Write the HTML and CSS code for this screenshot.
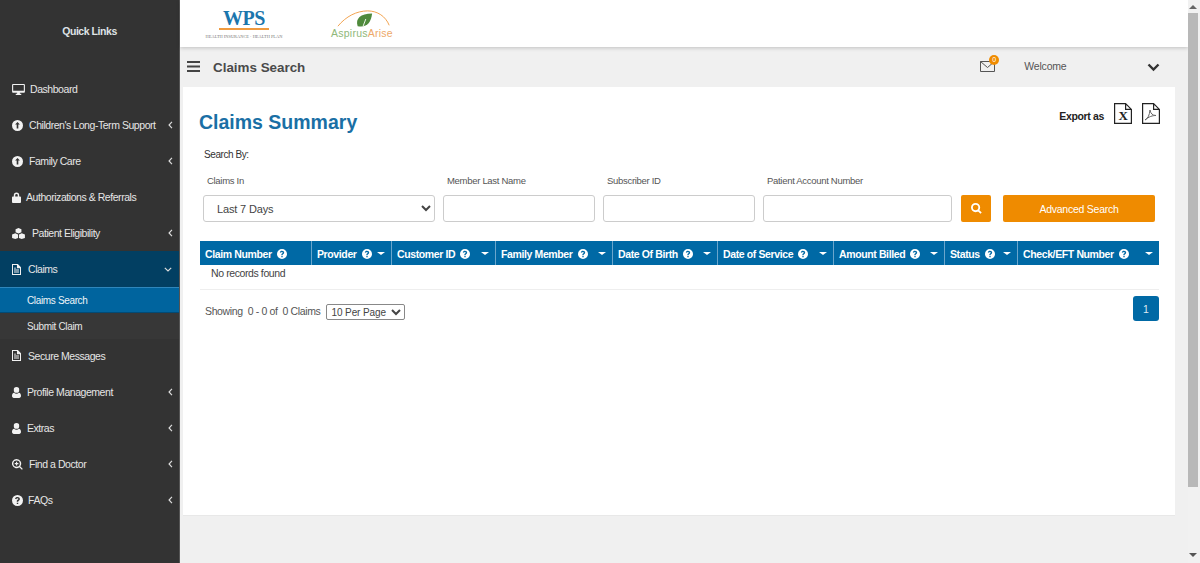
FILE: index.html
```html
<!DOCTYPE html>
<html lang="en">
<head>
<meta charset="utf-8">
<title>Claims Search</title>
<link rel="stylesheet" href="styles.css">
</head>
<body>
<svg class="sprite" aria-hidden="true">
  <symbol id="i-desktop" viewBox="0 0 14 12"><path fill-rule="evenodd" d="M1 0h12a1 1 0 0 1 1 1v7.500a1 1 0 0 1-1 1H8.500v1.200H10V12H4v-1.300h1.500V9.500H1a1 1 0 0 1-1-1V1a1 1 0 0 1 1-1zm.2 1.200v6.100h11.600V1.200z"/></symbol>
  <symbol id="i-circle-arrow" viewBox="0 0 12 12"><path fill-rule="evenodd" d="M6 0a6 6 0 1 1 0 12A6 6 0 0 1 6 0zm0 2.300L3.400 5h1.700v4.400h1.800V5h1.700z"/></symbol>
  <symbol id="i-lock" viewBox="0 0 10 12"><path fill-rule="evenodd" d="M2 5V3.500a3 3 0 0 1 6 0V5h1a1 1 0 0 1 1 1v5a1 1 0 0 1-1 1H1a1 1 0 0 1-1-1V6a1 1 0 0 1 1-1zm1.600 0h2.800V3.500a1.400 1.400 0 0 0-2.800 0z"/></symbol>
  <symbol id="i-cubes" viewBox="0 0 14 12"><path d="M7 0l3.200 1.300v3.400L7 6 3.800 4.700V1.300zM3.500 5.800l3 1.200v3.800l-3 1.200L0 10.800V7zM10.500 5.800L14 7v3.800L10.500 12l-3-1.200V7z"/></symbol>
  <symbol id="i-file" viewBox="0 0 10 12"><path fill-rule="evenodd" d="M0 0h6.500L10 3.500V12H0zm1.100 1.100v9.800h7.800V4.500H5.500V1.100zm1.100 5h5.600v1H2.200zm0 2.100h5.600v1H2.200zm0-4.200h2.300v1H2.200z"/></symbol>
  <symbol id="i-user" viewBox="0 0 10 12"><path d="M5 0a3 3 0 0 1 3 3.200A3 3 0 0 1 5 6.400a3 3 0 0 1-3-3.200A3 3 0 0 1 5 0zM2.300 6.300C3 7 4 7.400 5 7.400s2-.4 2.700-1.100C9.200 6.500 10 7.800 10 9.700 10 11.200 9.200 12 8 12H2c-1.200 0-2-.8-2-2.300 0-1.900.8-3.200 2.300-3.400z"/></symbol>
  <symbol id="i-search-plus" viewBox="0 0 12 12"><path fill-rule="evenodd" d="M5 0a5 5 0 0 1 4 8l2.800 2.800-1 1L8 9a5 5 0 1 1-3-9zm0 1.500a3.500 3.500 0 1 0 0 7 3.500 3.500 0 0 0 0-7zM4.400 3h1.200v1.400H7v1.200H5.600V7H4.400V5.600H3V4.400h1.400z"/></symbol>
  <symbol id="i-help" viewBox="0 0 12 12"><path fill-rule="evenodd" d="M6 0a6 6 0 1 1 0 12A6 6 0 0 1 6 0zM5.200 8.400v1.500h1.600V8.400zM6 2.100c-1.400 0-2.400.7-2.700 1.900l1.400.5c.2-.6.600-1 1.200-1 .6 0 1 .3 1 .8 0 .4-.3.700-.8 1-.7.500-.9.900-.9 1.800v.3h1.600v-.2c0-.4.100-.6.600-.9.800-.5 1.200-1.100 1.200-2 0-1.300-1.100-2.200-2.600-2.200z"/></symbol>
  <symbol id="i-left" viewBox="0 0 6 10"><path fill="none" stroke="currentColor" stroke-width="1.500" d="M4.800 1L1.200 5l3.600 4"/></symbol>
  <symbol id="i-down" viewBox="0 0 10 6"><path fill="none" stroke="currentColor" stroke-width="1.500" d="M1 1l4 3.800L9 1"/></symbol>
</svg>

<div class="app">
  <aside class="sidebar">
    <div class="quick">Quick Links</div>
    <nav class="menu">
      <a class="item"><svg class="ic w14"><use href="#i-desktop"/></svg><span class="lbl gap5">Dashboard</span></a>
      <a class="item"><svg class="ic"><use href="#i-circle-arrow"/></svg><span class="lbl gap6">Children's Long-Term Support</span><svg class="caret"><use href="#i-left"/></svg></a>
      <a class="item"><svg class="ic"><use href="#i-circle-arrow"/></svg><span class="lbl gap6">Family Care</span><svg class="caret"><use href="#i-left"/></svg></a>
      <a class="item"><svg class="ic nar"><use href="#i-lock"/></svg><span class="lbl gap5">Authorizations &amp; Referrals</span></a>
      <a class="item"><svg class="ic w14"><use href="#i-cubes"/></svg><span class="lbl gap7">Patient Eligibility</span><svg class="caret"><use href="#i-left"/></svg></a>
      <a class="item open"><svg class="ic nar"><use href="#i-file"/></svg><span class="lbl gap7">Claims</span><svg class="caret down"><use href="#i-down"/></svg></a>
      <a class="sub active">Claims Search</a>
      <a class="sub">Submit Claim</a>
      <a class="item short"><svg class="ic nar"><use href="#i-file"/></svg><span class="lbl gap7">Secure Messages</span></a>
      <a class="item"><svg class="ic nar"><use href="#i-user"/></svg><span class="lbl gap6">Profile Management</span><svg class="caret"><use href="#i-left"/></svg></a>
      <a class="item"><svg class="ic nar"><use href="#i-user"/></svg><span class="lbl gap6">Extras</span><svg class="caret"><use href="#i-left"/></svg></a>
      <a class="item"><svg class="ic"><use href="#i-search-plus"/></svg><span class="lbl gap6">Find a Doctor</span><svg class="caret"><use href="#i-left"/></svg></a>
      <a class="item"><svg class="ic"><use href="#i-help"/></svg><span class="lbl gap5">FAQs</span><svg class="caret"><use href="#i-left"/></svg></a>
    </nav>
  </aside>

  <div class="main">
    <header class="brand">
      <div class="wps">
        <div class="wps-name">WPS</div>
        <div class="wps-rule"></div>
        <div class="wps-tag">HEALTH INSURANCE · HEALTH PLAN</div>
      </div>
      <div class="aspirus">
        <svg class="aspirus-art" viewBox="0 0 60 20">
          <path fill="none" stroke="#f09a3e" stroke-width="1" d="M1 18C10 7 22 1 34 1c11 0 20 6 24 16"/>
          <path fill="#4f8a3c" d="M23 18c-3-8 3-14 16-14-1 10-6 16-16 14z"/>
          <path fill="none" stroke="#fff" stroke-width="1" d="M29 18l3-8"/>
        </svg>
        <div class="aspirus-name">Aspirus<span class="arise">Arise</span></div>
      </div>
    </header>

    <div class="titlebar">
      <svg class="burger" viewBox="0 0 13 11"><path fill="#444" d="M0 0h13v2H0zM0 4.500h13v2H0zM0 9h13v2H0z"/></svg>
      <h2 class="page-title">Claims Search</h2>
      <div class="mail">
        <svg class="envelope" viewBox="0 0 15 11"><path fill="none" stroke="#555" d="M.5.500h14v10H.5zM.5.500l7 6 7-6"/></svg>
        <span class="badge">0</span>
      </div>
      <span class="welcome">Welcome</span>
      <svg class="welcome-caret" viewBox="0 0 13 9"><path fill="none" stroke="#333" stroke-width="2.400" d="M1.500 1.500l5 5 5-5"/></svg>
    </div>

    <section class="card">
      <div class="card-head">
        <h1 class="summary">Claims Summary</h1>
        <div class="export">
          <span class="export-lbl">Export as</span>
          <svg class="doc" viewBox="0 0 18 21"><path fill="#fff" stroke="#222" stroke-width="1.200" d="M.6.600h11l5.800 5.800v14H.6zM11.600.600v5.800h5.800"/><text x="9" y="16.500" class="doc-x">X</text></svg>
          <svg class="doc" viewBox="0 0 18 21"><path fill="#fff" stroke="#222" stroke-width="1.200" d="M.6.600h11l5.800 5.800v14H.6zM11.600.600v5.800h5.800"/><path fill="none" stroke="#666" d="M3 17c3-1.500 4.500-5 5-10 .5 3.500 2.500 5.500 6 5.500-3.500 0-7 1-11 4.500z"/></svg>
        </div>
      </div>

      <div class="search-by">Search By:</div>
      <div class="filters">
        <label class="f-label">Claims In</label>
        <label class="f-label">Member Last Name</label>
        <label class="f-label">Subscriber ID</label>
        <label class="f-label">Patient Account Number</label>
        <span></span><span></span>
        <select class="field select"><option>Last 7 Days</option></select>
        <input class="field" type="text">
        <input class="field" type="text">
        <input class="field" type="text">
        <button class="btn btn-icon" type="button"><svg class="btn-search" viewBox="0 0 12 12"><path fill="none" stroke="#fff" stroke-width="2" d="M5 1a4 4 0 1 1 0 8 4 4 0 0 1 0-8zM8 8l3 3"/></svg></button>
        <button class="btn btn-adv" type="button">Advanced Search</button>
      </div>

      <div class="table">
        <div class="th">Claim Number<svg class="help"><use href="#i-help"/></svg></div>
        <div class="th">Provider<svg class="help"><use href="#i-help"/></svg><i class="tri"></i></div>
        <div class="th">Customer ID<svg class="help"><use href="#i-help"/></svg><i class="tri"></i></div>
        <div class="th">Family Member<svg class="help"><use href="#i-help"/></svg><i class="tri"></i></div>
        <div class="th">Date Of Birth<svg class="help"><use href="#i-help"/></svg><i class="tri"></i></div>
        <div class="th">Date of Service<svg class="help"><use href="#i-help"/></svg><i class="tri"></i></div>
        <div class="th">Amount Billed<svg class="help"><use href="#i-help"/></svg><i class="tri"></i></div>
        <div class="th">Status<svg class="help"><use href="#i-help"/></svg><i class="tri"></i></div>
        <div class="th last">Check/EFT Number<svg class="help"><use href="#i-help"/></svg><i class="tri"></i></div>
        <div class="empty">No records found</div>
      </div>

      <div class="pager">
        <span class="showing">Showing&nbsp; 0 - 0 of&nbsp; 0 Claims</span>
        <select class="per-page"><option>10 Per Page</option></select>
        <button class="page-btn" type="button">1</button>
      </div>
    </section>
  </div>

  <div class="scrollbar">
    <i class="sb-up"></i>
    <div class="sb-thumb"></div>
    <i class="sb-down"></i>
  </div>
</div>
</body>
</html>
```

FILE: styles.css
```css
* { box-sizing: border-box; }
html, body { margin: 0; padding: 0; height: 100%; overflow: hidden; }
body { font-family: "Liberation Sans", Arial, sans-serif; font-size: 10.500px; letter-spacing: -.35px; color: #444; background: #f0f0f0; }
.sprite { display: none; }
.app { display: flex; height: 563px; }

/* sidebar */
.sidebar { width: 180px; flex: none; background: #333; color: #e6e6e6; border-right: 1px solid #555; letter-spacing: -.45px; }
.quick { height: 71px; padding-top: 25px; text-align: center; font-weight: bold; color: #dfe3e6; }
.item { display: flex; align-items: center; height: 36px; padding-left: 12px; padding-right: 5px; }
.item.short { height: 35px; padding-bottom: 2px; }
.item.open { background: #023f62; height: 37px; border-bottom: 1px solid #2f86bb; }
.ic { width: 11px; height: 11px; fill: #f2f2f2; flex: none; }
.ic.w14 { width: 13px; }
.ic.nar { width: 9px; }
.lbl { white-space: nowrap; }
.gap5 { margin-left: 5px; }
.gap6 { margin-left: 6px; }
.gap7 { margin-left: 7px; }
.caret { width: 5px; height: 8px; margin-left: auto; margin-right: 1px; color: #ddd; flex: none; }
.caret.down { width: 8px; height: 5px; margin-right: 2px; }
.sub { display: flex; align-items: center; height: 25px; padding-left: 27px; background: #373737; font-size: 10px; letter-spacing: -.35px; }
.sub.active { background: #00649e; border-bottom: 1px solid #024a75; height: 25px; color: #eef4f8; }
.sub:not(.active) { height: 26px; }

/* main */
.main { flex: none; width: 1008px; display: flex; flex-direction: column; }
.brand { height: 47px; background: #fff; box-shadow: 0 1px 4px rgba(0,0,0,.2); display: flex; align-items: flex-start; position: relative; padding-left: 24px; }
.wps { width: 80px; padding-top: 9px; text-align: center; letter-spacing: 0; }
.wps-name { font-family: "Liberation Serif", serif; font-weight: bold; font-size: 20px; line-height: 19px; color: #1b76ad; letter-spacing: -.5px; }
.wps-rule { height: 2px; margin: 0 15px; background: #f09a3e; }
.wps-tag { font-family: "Liberation Serif", serif; font-size: 4.400px; line-height: 5px; margin-top: 4px; color: #777; white-space: nowrap; }
.aspirus { margin-left: 47px; width: 62px; padding-top: 10px; letter-spacing: 0; }
.aspirus-art { display: block; width: 60px; height: 18px; margin-left: 3px; }
.aspirus-name { font-size: 10.500px; line-height: 11px; color: #8fb87a; white-space: nowrap; letter-spacing: .25px; }
.arise { color: #eda869; }

.titlebar { height: 40px; display: flex; align-items: center; padding-left: 7px; background: #f0f0f0; }
.burger { width: 13px; height: 11px; flex: none; margin-top: -1px; }
.page-title { margin: 0 0 0 13px; font-size: 13.400px; letter-spacing: 0; font-weight: bold; color: #4a4a4a; }
.mail { position: relative; margin-left: 675px; width: 15px; height: 11px; margin-top: -2px; }
.envelope { display: block; width: 15px; height: 11px; }
.badge { position: absolute; top: -6px; right: -4px; width: 10px; height: 10px; border-radius: 50%; background: #ef8b00; color: #fff; font-size: 7px; line-height: 10px; text-align: center; letter-spacing: 0; }
.welcome { margin-left: 29px; color: #555; letter-spacing: -.2px; margin-top: -2px; }
.welcome-caret { width: 13px; height: 9px; margin-left: 81px; }

.card { margin-left: 3px; width: 992px; height: 429px; background: #fff; border-bottom: 1px solid #e8e8e8; padding: 0 16px 0 17px; }
.card-head { display: flex; justify-content: space-between; height: 60px; padding-top: 16px; }
.summary { margin: 6px 0 0 -1px; font-size: 19.500px; letter-spacing: 0; line-height: 26px; font-weight: bold; color: #1a6fa5; }
.export { display: flex; align-items: flex-start; }
.export-lbl { font-weight: bold; color: #222; margin-top: 7px; margin-right: 10px; }
.doc { width: 18px; height: 21px; margin-right: 10px; }
.doc:last-child { margin-right: -1px; }
.doc-x { font-family: "Liberation Serif", serif; font-weight: bold; font-size: 13px; text-anchor: middle; fill: #222; }

.search-by { margin-left: 4px; font-size: 10px; letter-spacing: -.42px; color: #333; line-height: 16px; }
.filters { display: grid; grid-template-columns: 232px 152px 152px 189px 30px 152px; column-gap: 8px; margin: 11px 0 0 3px; align-items: center; }
.f-label { font-size: 9.500px; letter-spacing: -.3px; line-height: 14px; padding-left: 4px; color: #555; height: 20px; }
.field { height: 27px; border: 1px solid #ccc; border-radius: 3px; background: #fff; padding: 0 0 0 12px; font: 11px "Liberation Sans", Arial, sans-serif; letter-spacing: -.15px; color: #444; margin-top: 1px; }
.select { padding-left: 9px; }
.btn { border: 0; border-radius: 2px; background: #ef8b00; color: #fff; height: 27px; margin-top: 1px; font: 10.500px "Liberation Sans", Arial, sans-serif; letter-spacing: -.25px; display: flex; align-items: center; justify-content: center; padding: 0; }
.btn-icon { margin-left: 1px; width: 30px; }
.btn-adv { margin-left: 5px; width: 152px; }
.btn-search { width: 11px; height: 11px; }

.table { display: grid; grid-template-columns: 112px 80px 104px 117px 105px 116px 111px 73px 141px; margin-top: 19px; border-bottom: 1px solid #eee; }
.th { height: 24px; background: #0069a5; color: #fff; font-weight: bold; letter-spacing: -.38px; display: flex; align-items: center; padding: 1px 5px 0; border-right: 1px solid #6ba6cc; white-space: nowrap; }
.th.last { border-right: 0; }
.help { width: 10px; height: 10px; fill: #fff; margin-left: 5px; flex: none; }
.tri { width: 0; height: 0; margin-left: auto; margin-right: 1px; border-left: 4px solid transparent; border-right: 4px solid transparent; border-top: 3px solid #fff; }
.empty { grid-column: 1 / -1; height: 24px; padding: 1px 0 0 11px; line-height: 14px; letter-spacing: -.4px; color: #444; }

.pager { display: flex; align-items: flex-start; padding-top: 6px; padding-left: 5px; }
.showing { margin-top: 9px; letter-spacing: -.37px; color: #555; line-height: 12px; white-space: nowrap; }
.per-page { margin: 8px 0 0 6px; width: 79px; height: 16px; font: 10px "Liberation Sans", Arial, sans-serif; letter-spacing: -.1px; color: #444; background: #fff; border: 1px solid #888; border-radius: 2px; padding: 0; }
.page-btn { margin-left: auto; width: 26px; height: 25px; border: 0; border-radius: 3px; background: #0069a5; color: #dfeaf3; font: 10.500px "Liberation Sans", Arial, sans-serif; padding: 0; }

/* scrollbar */
.scrollbar { flex: none; width: 12px; position: relative; background: #f1f1f1; display: flex; flex-direction: column; align-items: flex-start; }
.sb-thumb { width: 10px; height: 474px; background: #b8b8b8; }
.sb-up, .sb-down { display: block; width: 0; height: 0; margin-left: 1px; border-left: 4px solid transparent; border-right: 4px solid transparent; }
.sb-up { border-bottom: 4px solid #666; margin-top: 5px; margin-bottom: 4px; }
.sb-down { border-top: 4px solid #555; margin-top: 66px; }
```
